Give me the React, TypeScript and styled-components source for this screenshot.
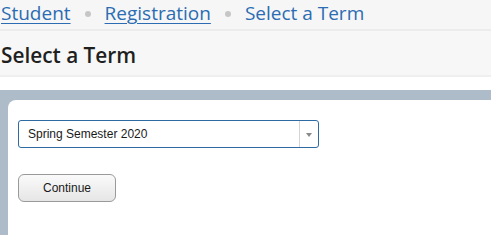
import React from 'react';
import styled, { createGlobalStyle } from 'styled-components';

const GlobalStyle = createGlobalStyle`
  html, body {
    margin: 0;
    padding: 0;
    background: #ffffff;
    overflow: hidden;
  }
  * {
    box-sizing: border-box;
  }
`;

const Page = styled.div`
  width: 491px;
  height: 235px;
  display: flex;
  flex-direction: column;
`;

const Breadcrumbs = styled.nav`
  height: 31px;
  background: #f6f6f6;
  border-bottom: 2px solid #ececec;
  display: flex;
  align-items: center;
  padding: 0 0 4px 1px;
  font-family: 'Open Sans', 'Noto Sans', sans-serif;
  font-size: 19px;
  white-space: nowrap;
`;

const Crumb = styled.a<{ $current?: boolean }>`
  color: #2b6cb3;
  text-decoration: ${(p) => (p.$current ? 'none' : 'underline')};
  text-underline-offset: 3px;
  text-decoration-thickness: 1px;
`;

const Dot = styled.span`
  width: 6px;
  height: 6px;
  border-radius: 50%;
  background: #c6c6c6;
  margin: 2px 14px 0;
`;

const TitleBar = styled.header`
  height: 46px;
  background: #f7f7f7;
  border-bottom: 2px solid #efefef;
  display: flex;
  align-items: center;
  padding: 4px 0 0 1px;
`;

const Title = styled.h1`
  margin: 0;
  font-family: 'Open Sans', 'Noto Sans', sans-serif;
  font-weight: 600;
  font-size: 20.8px;
  color: #1f1f1f;
`;

const Band = styled.main`
  flex: 1;
  margin-top: 13px;
  background: #aebcc9;
  padding: 10px 0 0 8px;
  display: flex;
`;

const Card = styled.section`
  flex: 1;
  background: #ffffff;
  border-top-left-radius: 8px;
  padding: 20px 10px 0;
  display: flex;
  flex-direction: column;
  align-items: flex-start;
  gap: 26px;
`;

const Select = styled.div`
  width: 301px;
  height: 28px;
  border: 1px solid #2f6aa3;
  border-radius: 3px;
  display: flex;
  align-items: center;
  font-family: 'Liberation Sans', Arial, sans-serif;
  font-size: 12px;
  color: #1a1a1a;
`;

const SelectValue = styled.span`
  flex: 1;
  padding-left: 9px;
`;

const SelectArrow = styled.span`
  width: 19px;
  height: 100%;
  border-left: 1px solid #d4d4d4;
  display: flex;
  align-items: center;
  justify-content: center;
  &::after {
    content: '';
    border-left: 3px solid transparent;
    border-right: 3px solid transparent;
    border-top: 4px solid #8a8a8a;
    margin-top: 1px;
  }
`;

const Button = styled.button`
  width: 98px;
  height: 28px;
  border: 1px solid #9a9a9a;
  border-radius: 6px;
  background: linear-gradient(#fafafa, #e6e6e6);
  font-family: 'Liberation Sans', Arial, sans-serif;
  font-size: 12px;
  color: #1a1a1a;
  padding: 0;
`;

export default function App() {
  return (
    <>
      <GlobalStyle />
      <Page>
        <Breadcrumbs>
          <Crumb href="#">Student</Crumb>
          <Dot />
          <Crumb href="#">Registration</Crumb>
          <Dot />
          <Crumb $current>Select a Term</Crumb>
        </Breadcrumbs>
        <TitleBar>
          <Title>Select a Term</Title>
        </TitleBar>
        <Band>
          <Card>
            <Select>
              <SelectValue>Spring Semester 2020</SelectValue>
              <SelectArrow />
            </Select>
            <Button>Continue</Button>
          </Card>
        </Band>
      </Page>
    </>
  );
}
